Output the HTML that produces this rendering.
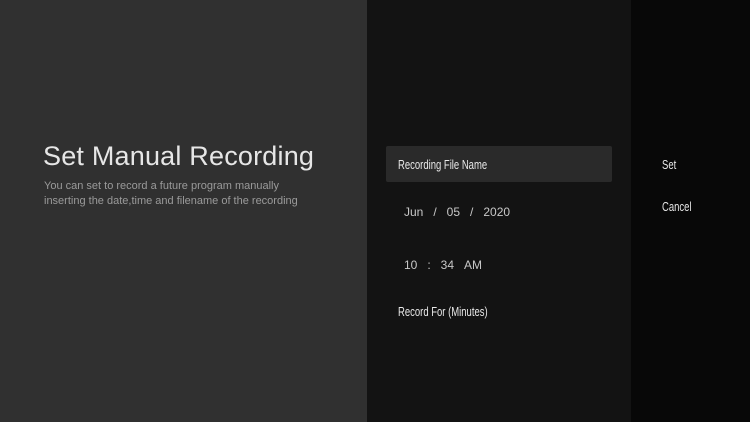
<!DOCTYPE html>
<html><head><style>
body{margin:0;width:750px;height:422px;overflow:hidden;background:#080808;font-family:"Liberation Sans",sans-serif;position:relative}
.l{position:absolute;left:0;top:0;width:367px;height:422px;background:#303030}
.m{position:absolute;left:367px;top:0;width:264px;height:422px;background:#131313}
.t{position:absolute;white-space:nowrap}
h1{position:absolute;left:43px;top:141px;margin:0;font-weight:300;font-size:27px;color:#e6e6e6;letter-spacing:0.2px;white-space:nowrap}
.d{left:44px;top:179px;font-size:11px;line-height:15px;color:#9a9a9a}
.sel{position:absolute;left:386px;top:146px;width:226px;height:36px;background:#2a2a2a;border-radius:2px}
.w{color:#e8e8e8;font-size:13px;transform:scaleX(0.73);transform-origin:0 0}
.g{color:#c8c8c8;font-size:12px}
</style></head><body>
<div class="l"></div><div class="m"></div>
<h1>Set Manual Recording</h1>
<div class="t d">You can set to record a future program manually<br>inserting the date,time and filename of the recording</div>
<div class="sel"></div>
<div class="t w" style="left:398px;top:157px">Recording File Name</div>
<div class="t g" style="left:404px;top:205px">Jun&nbsp;&nbsp;&nbsp;/&nbsp;&nbsp;&nbsp;05&nbsp;&nbsp;&nbsp;/&nbsp;&nbsp;&nbsp;2020</div>
<div class="t g" style="left:404px;top:258px">10&nbsp;&nbsp;&nbsp;:&nbsp;&nbsp;&nbsp;34&nbsp;&nbsp;&nbsp;AM</div>
<div class="t w" style="left:398px;top:304px">Record For (Minutes)</div>
<div class="t w" style="left:662px;top:157px">Set</div>
<div class="t w" style="left:662px;top:199px">Cancel</div>
</body></html>
